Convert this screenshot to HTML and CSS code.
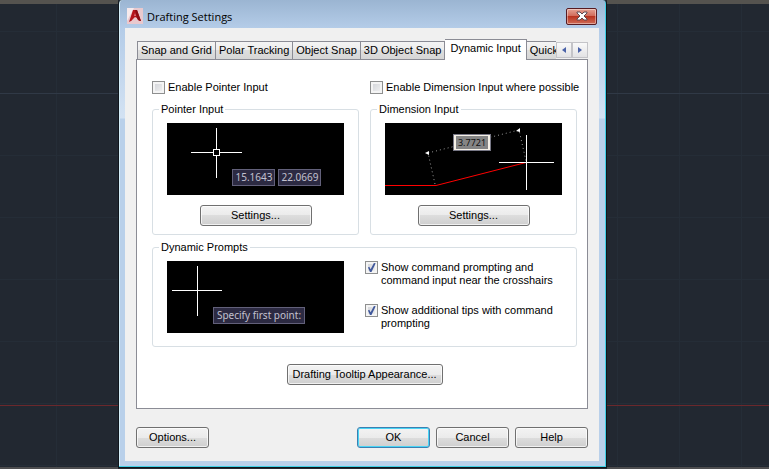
FILE: index.html
```html
<!DOCTYPE html>
<html lang="en">
<head>
    <meta charset="UTF-8">
    <meta name="viewport" content="width=device-width, initial-scale=1.0">
    <title>Drafting Settings</title>
    <link rel="stylesheet" href="styles.css">
</head>
<body>

    <div class="canvas canvas-left"></div>

    <main class="dialog">
        <!-- Title bar -->
        <header class="titlebar">
            <svg class="logo" width="16" height="16" viewBox="0 0 16 16" aria-hidden="true">
                <rect width="16" height="16" fill="#e9c9ce"/>
                <path d="M0 0H7L0 13Z" fill="#f7eaec"/>
                <path d="M2 14L6 2H10L14 13Q11 13 10 10L8 9L6 11Q5 13 2 14Z" fill="#b5141c"/>
                <path d="M8 2H10L14 13Q11 13 10 10Z" fill="#8c0c14"/>
                <path d="M8 5L9 8H7Z" fill="#d8747c"/>
            </svg>
            <h1>Drafting Settings</h1>
            <button class="close" type="button" aria-label="Close">
                <svg width="12" height="10" viewBox="0 0 12 10">
                    <path d="M1 1H4L6 3L8 1H11V2L8 5L11 8V9H8L6 7L4 9H1V8L4 5L1 2Z" fill="#fff" stroke="#5d4a52"/>
                </svg>
            </button>
        </header>

        <form class="content">
            <div class="tabbar">
                <div class="tabs" role="tablist">
                    <button class="tab" type="button" role="tab">Snap and Grid</button>
                    <button class="tab" type="button" role="tab">Polar Tracking</button>
                    <button class="tab" type="button" role="tab">Object Snap</button>
                    <button class="tab" type="button" role="tab">3D Object Snap</button>
                    <button class="tab active" type="button" role="tab" aria-selected="true">Dynamic Input</button>
                    <button class="tab" type="button" role="tab">Quick</button>
                </div>
                <div class="scroller">
                    <button type="button" aria-label="Previous tabs"><svg width="4" height="6" viewBox="0 0 4 6"><path d="M4 0V6L0 3Z"/></svg></button>
                    <button type="button" aria-label="Next tabs"><svg width="4" height="6" viewBox="0 0 4 6"><path d="M0 0V6L4 3Z"/></svg></button>
                </div>
            </div>

            <section class="panel">
                <div class="columns">
                    <div class="column">
                        <label class="check"><input type="checkbox"> Enable Pointer Input</label>
                        <fieldset class="group">
                            <legend>Pointer Input</legend>
                            <svg class="preview" width="177" height="72" viewBox="0 0 177 72">
                                <rect width="177" height="72"/>
                                <g class="cross">
                                    <path d="M49.500 5V55M24 29.500H75"/>
                                    <rect x="46.500" y="26.500" width="6" height="6"/>
                                </g>
                                <g class="tip">
                                    <rect x="65.500" y="46.500" width="42" height="16"/>
                                    <rect x="111.500" y="46.500" width="42" height="16"/>
                                    <text x="87" y="58">15.1643</text>
                                    <text x="133" y="58">22.0669</text>
                                </g>
                            </svg>
                            <button class="btn wide" type="button">Settings...</button>
                        </fieldset>
                    </div>
                    <div class="column">
                        <label class="check"><input type="checkbox"> Enable Dimension Input where possible</label>
                        <fieldset class="group">
                            <legend>Dimension Input</legend>
                            <svg class="preview" width="177" height="72" viewBox="0 0 177 72">
                                <rect width="177" height="72"/>
                                <path class="dots" d="M50 61L43 30L134 7L141 38"/>
                                <path class="line" d="M0 62.500H51L141 39.500"/>
                                <path class="cross" d="M141.500 12V67M114 39.500H169"/>
                                <path d="M40 30L44 28V32Z M131 8L135 5V9Z" fill="#fff"/>
                                <rect x="68.500" y="11.500" width="37" height="16" fill="#f5f0e6" stroke="#777785"/>
                                <rect x="71" y="13" width="32" height="13" fill="#858585"/>
                                <text class="value" x="87" y="23">3.7721</text>
                            </svg>
                            <button class="btn wide" type="button">Settings...</button>
                        </fieldset>
                    </div>
                </div>

                <fieldset class="group prompts">
                    <legend>Dynamic Prompts</legend>
                    <svg class="preview" width="177" height="72" viewBox="0 0 177 72">
                        <rect width="177" height="72"/>
                        <path class="cross" d="M30.500 5V55M5 29.500H55"/>
                        <g class="tip">
                            <rect x="46.500" y="46.500" width="91" height="16"/>
                            <text x="92" y="58">Specify first point:</text>
                        </g>
                    </svg>
                    <div class="options">
                        <label class="check"><input type="checkbox" checked> <span>Show command prompting and<br>command input near the crosshairs</span></label>
                        <label class="check"><input type="checkbox" checked> <span>Show additional tips with command<br>prompting</span></label>
                    </div>
                </fieldset>

                <button class="btn tooltip-btn" type="button">Drafting Tooltip Appearance...</button>
            </section>

            <footer class="actions">
                <button class="btn options-btn" type="button">Options...</button>
                <button class="btn default" type="submit">OK</button>
                <button class="btn" type="button">Cancel</button>
                <button class="btn" type="button">Help</button>
            </footer>
        </form>
    </main>

    <div class="canvas canvas-right"></div>

</body>
</html>
```
FILE: styles.css
```css
* {
    box-sizing: border-box;
}

body {
    margin: 0;
    min-height: 100vh;
    display: grid;
    grid-template-columns: minmax(0, 118fr) minmax(0, 489fr) minmax(0, 162fr);
    background: #222831;
    font-family: "Liberation Sans", Arial, sans-serif;
    font-size: 11px;
    line-height: 13px;
    color: #000;
}

/* Drawing area on both sides of the dialog */
.canvas {
    border-top: 4px solid #55534f;
    border-bottom: 2px solid #4e4e50;
    background-color: #222831;
    background-image:
        linear-gradient(#6b282c, #6b282c),
        linear-gradient(#303946, #303946),
        linear-gradient(#252d37 1px, transparent 1px),
        linear-gradient(90deg, #252d37 1px, transparent 1px);
    background-size: 100% 1px, 100% 1px, 62px 62px, 62px 62px;
    background-repeat: no-repeat, no-repeat, repeat, repeat;
}

.canvas-left {
    background-position: 0 401px, 0 89px, 0 27px, 56px 0;
}

.canvas-right {
    background-position: 0 401px, 0 89px, 0 27px, 10px 0;
}

/* Dialog frame */
.dialog {
    display: flex;
    flex-direction: column;
    padding: 0 7px 6px 6px;
    border: 1px solid #10161c;
    border-top: 0;
    border-radius: 4px 4px 0 0;
    margin-bottom: 1px;
    background: linear-gradient(#9bb5d2, #b4cce8 28px, #d3e2f3 118px, #b9d0ea 119px);
    box-shadow: inset -1px -1px #3fcfe6, inset 1px 0 #d5eef8;
}

.titlebar {
    display: flex;
    align-items: center;
    height: 28px;
    padding: 4px 2px 0;
    gap: 4px;
}

.titlebar h1 {
    flex: 1;
    margin: 0;
    font-family: "Open Sans", sans-serif;
    font-size: 11px;
    font-weight: normal;
}

.close {
    display: flex;
    align-items: center;
    justify-content: center;
    width: 31px;
    height: 17px;
    padding: 0;
    border: 1px solid #571b22;
    border-radius: 2px;
    background: linear-gradient(#e5a294, #cf6655 50%, #b93420 50%, #cf6b56);
    box-shadow: inset 0 0 0 1px rgba(255, 255, 255, 0.4);
}

.content {
    flex: 1;
    display: flex;
    flex-direction: column;
    padding: 11px 11px 13px;
    background: #f0f0f0;
}

/* Tabs */
.tabbar {
    position: relative;
    z-index: 1;
    display: flex;
    align-items: flex-end;
    margin-bottom: -1px;
}

.tabs {
    flex: 1;
    min-width: 0;
    display: flex;
    align-items: flex-end;
    padding-left: 1px;
    overflow: hidden;
}

.tab {
    flex: none;
    height: 19px;
    padding: 0 3px;
    border: 1px solid #8b8c95;
    border-width: 1px 1px 1px 0;
    background: linear-gradient(#f4f4f4, #ececec 50%, #dedede 50%, #d6d6d6);
    font: inherit;
    color: inherit;
}

.tab:first-child {
    border-left-width: 1px;
}

.tab.active {
    height: 21px;
    padding: 0 5px 3px;
    border-bottom: 0;
    background: #fff;
}

.scroller {
    display: flex;
    align-self: center;
    background: #fff;
}

.scroller button {
    display: flex;
    align-items: center;
    justify-content: center;
    width: 16px;
    height: 16px;
    padding: 0;
    border: 1px solid #c4c4c8;
    background: linear-gradient(#fafafa, #e2e2e4);
    fill: #4a62a8;
}

.panel {
    flex: 1;
    display: flex;
    flex-direction: column;
    padding: 21px 10px 21px 15px;
    border: 1px solid #8b8c95;
    background: #fff;
}

.columns {
    display: flex;
    gap: 11px;
}

.column {
    flex: 1;
    min-width: 0;
}

/* Checkboxes */
.check {
    display: flex;
    align-items: flex-start;
    gap: 3px;
    white-space: nowrap;
}

.check input {
    appearance: none;
    flex: none;
    width: 13px;
    height: 13px;
    margin: 0;
    border: 1px solid #8e8f8f;
    background: linear-gradient(135deg, #cfd1d6, #f4f4f4);
    box-shadow: inset 0 0 0 2px #f4f4f4;
}

.check input:checked::before {
    content: "";
    display: block;
    width: 11px;
    height: 11px;
    background: #40589c;
    clip-path: polygon(18% 50%, 30% 44%, 42% 65%, 72% 10%, 88% 12%, 50% 90%, 36% 90%);
}

/* Group boxes */
.group {
    display: flex;
    flex-direction: column;
    align-items: center;
    min-width: 0;
    margin: 9px 0 0;
    padding: 7px 14px 8px;
    border: 1px solid #d8dfe4;
    border-radius: 3px;
}

.group legend {
    margin-left: -8px;
    padding: 0 2px;
}

.preview {
    align-self: flex-start;
    flex: none;
}

.cross {
    fill: #000;
    stroke: #fff;
}

.dots {
    fill: none;
    stroke: #999;
    stroke-dasharray: 1 3;
}

.line {
    fill: none;
    stroke: #f00;
}

.tip rect {
    fill: #2c2a42;
    stroke: #62607a;
}

.tip text,
.value {
    font-family: "Noto Sans", sans-serif;
    font-size: 9px;
    text-anchor: middle;
    fill: #c2c1cf;
}

.tip text {
    font-size: 10px;
}

.value {
    fill: #111;
}

.prompts {
    flex-direction: row;
    align-items: flex-start;
    gap: 21px;
    margin-top: 6px;
    padding-bottom: 13px;
}

.options {
    display: flex;
    flex-direction: column;
    gap: 17px;
}

/* Push buttons */
.btn {
    width: 73px;
    height: 21px;
    padding: 0;
    border: 1px solid #707070;
    border-radius: 3px;
    background: linear-gradient(#f3f3f3, #ebebeb 50%, #dddddd 50%, #cfcfcf);
    box-shadow: inset 0 0 0 1px rgba(255, 255, 255, 0.7);
    font: inherit;
    color: inherit;
}

.wide {
    width: 112px;
    margin-top: 10px;
}

.tooltip-btn {
    width: 156px;
    margin: 17px auto 0;
}

.default {
    border-color: #3c7fb1;
    box-shadow: inset 0 0 0 1px #48d4f5;
}

.actions {
    display: flex;
    gap: 6px;
    margin-top: 18px;
}

.options-btn {
    margin-right: auto;
}
```
